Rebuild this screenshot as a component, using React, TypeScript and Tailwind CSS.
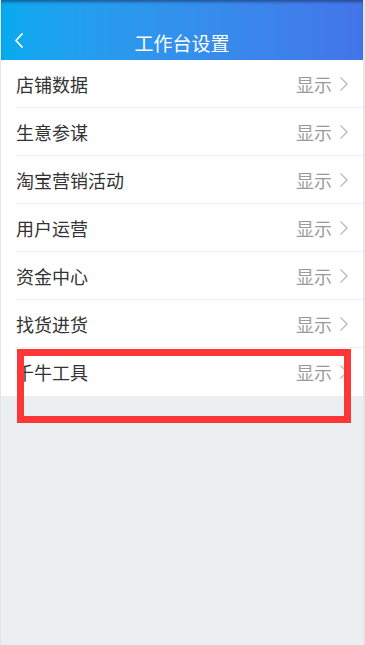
import React from "react";

const rows = ["店铺数据", "生意参谋", "淘宝营销活动", "用户运营", "资金中心", "找货进货", "千牛工具"];

function Chevron({ className }: { className?: string }) {
  return (
    <svg width="8" height="14" viewBox="0 0 8 14" className={className} fill="none">
      <path d="M1 1 L7 7 L1 13" stroke="currentColor" strokeWidth="1.3" strokeLinecap="round" strokeLinejoin="round" />
    </svg>
  );
}

export default function App() {
  return (
    <div
      className="relative w-[365px] h-[645px] bg-[#eceff2] border-l border-l-[#e4e6e9] border-r-2 border-r-[#e4e6e9] overflow-hidden"
      style={{ fontFamily: '"Noto Sans CJK SC", "Noto Sans", sans-serif' }}
    >
      <div className="relative h-[60px] bg-gradient-to-r from-[#06aaef] to-[#4375ea] shadow-[inset_0_3px_3px_-1px_rgba(20,40,80,0.55)] flex items-center justify-center pt-[25px]">
        <div className="absolute left-[13px] top-[33px] text-white">
          <svg width="10" height="15" viewBox="0 0 10 15" fill="none">
            <path d="M8 1 L2 7.5 L8 14" stroke="white" strokeWidth="1.8" strokeLinecap="round" strokeLinejoin="round" />
          </svg>
        </div>
        <span className="text-white text-[19px] leading-none tracking-[0px]">工作台设置</span>
      </div>
      <div className="bg-white">
        {rows.map((r, i) => (
          <div key={r} className="pl-[15px]">
            <div
              className={
                "h-[48px] flex items-center justify-between pr-[15px] " +
                (i < rows.length - 1 ? "border-b border-b-[#eeeeee]" : "")
              }
            >
              <span className="text-[18px] text-[#333333] leading-none">{r}</span>
              <div className="flex items-center gap-[8px]">
                <span className="text-[18px] text-[#9a9a9a] leading-none">显示</span>
                <Chevron className="text-[#b9b9b9]" />
              </div>
            </div>
          </div>
        ))}
      </div>
      <div className="absolute left-[16px] top-[349px] w-[334px] h-[74px] border-[7px] border-[#fd3737]" />
    </div>
  );
}
